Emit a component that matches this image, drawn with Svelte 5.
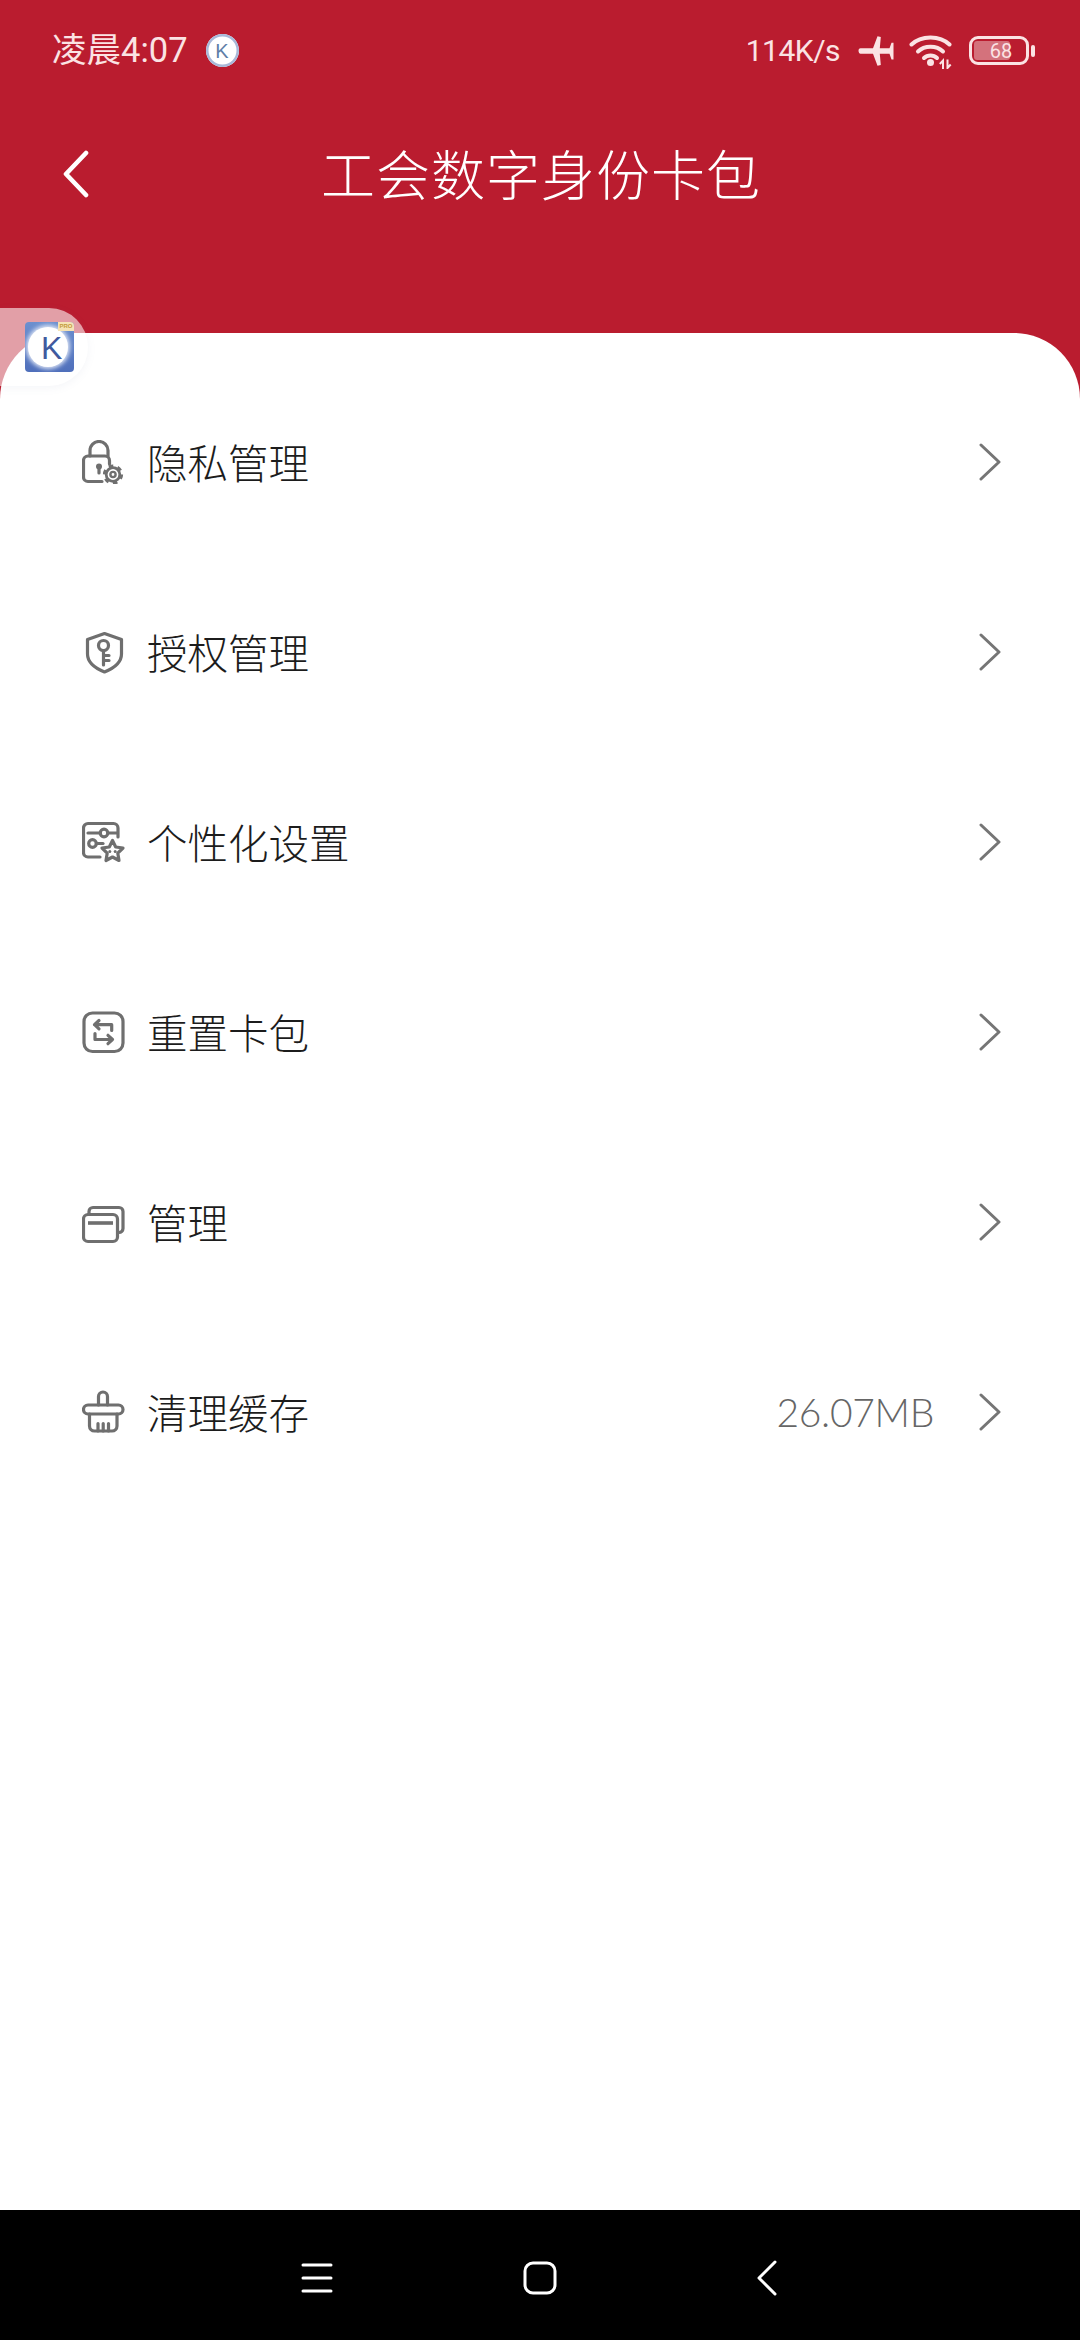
<script>
  const icons = {
    lock: `<path d="M20 41.5H6a4.500 4.500 0 0 1-4.500-4.500V20.500a4.500 4.500 0 0 1 4.500-4.500H23a4.500 4.500 0 0 1 4.500 4.500V24"/><path d="M8 16V10.500a9 9 0 0 1 18 0V16"/><circle cx="17" cy="26.500" r="3" fill="#6f6f6f" stroke="none"/><path d="M17 27v6"/><circle cx="31" cy="34.500" r="6.800" stroke-width="2.800"/><circle cx="31" cy="34.500" r="8.600" stroke-width="3" stroke-dasharray="4.500 4.500" stroke-linecap="butt"/><circle cx="31" cy="34.500" r="2.600" stroke-width="2.400"/>`,
    shield: `<path d="M22.500 3.500 39.500 9.500V24c0 8-7 14-17 18C12.500 38 5.500 32 5.500 24V9.500Z"/><circle cx="21.500" cy="15.500" r="5"/><path d="M21.500 20.500V35M21.500 25.500h5.500M21.500 30.500h5.500"/>`,
    settings: `<path d="M18 37H6a4.500 4.500 0 0 1-4.500-4.500V8A4.500 4.500 0 0 1 6 3.500H31.500A4.500 4.500 0 0 1 36 8V17"/><path d="M6 13h12.500M26 13h9"/><circle cx="22" cy="13" r="3.800"/><circle cx="10.500" cy="23.500" r="3.800"/><path d="M14.500 23.500h6.500"/><path d="M30.500 20.500 33.700 27 41 28 35.800 33.200 37 40.500 30.500 37 24 40.500 25.200 33.200 20 28 27.300 27Z" fill="#fff"/><circle cx="27.800" cy="31.500" r="1.500" fill="#6f6f6f" stroke="none"/><circle cx="33.200" cy="31.500" r="1.500" fill="#6f6f6f" stroke="none"/>`,
    reset: `<rect x="2" y="3" width="39" height="38.500" rx="8.500"/><path d="M29.700 20.500V14.700H12.500M17 10.500 12.500 14.700 17 18.900"/><path d="M13 23.500V29.500H30.500M26 25.300 30.500 29.500 26 33.700"/>`,
    cards: `<rect x="1.500" y="14.500" width="34" height="27" rx="4.500"/><path d="M7 14V11.500A4 4 0 0 1 11 7.500H37A4 4 0 0 1 41 11.500V28.500A4 4 0 0 1 37 32.500H35.500"/><path d="M6 23H31" stroke-width="3.600" stroke-linecap="butt"/>`,
    broom: `<path d="M16.500 15V6.500a4.500 4.500 0 0 1 9 0V15"/><rect x="1.500" y="15" width="39.500" height="9" rx="4.500"/><path d="M7.500 24V36a5 5 0 0 0 5 5H30a5 5 0 0 0 5-5V24"/><path d="M16 41V33.500M21.200 41V33.500M26.500 41V33.500"/>`
  };

  const rows = [
    { icon: 'lock', label: '隐私管理' },
    { icon: 'shield', label: '授权管理' },
    { icon: 'settings', label: '个性化设置' },
    { icon: 'reset', label: '重置卡包' },
    { icon: 'cards', label: '管理' },
    { icon: 'broom', label: '清理缓存', value: '26.07MB' }
  ];
</script>

<div class="page">
  <header class="status">
    <div class="status-left">
      <span class="time">凌晨4:07</span>
      <span class="app-dot"><span>K</span></span>
    </div>
    <div class="status-right">
      <span class="speed">114K/s</span>
      <svg class="plane" width="36" height="32" viewBox="0 0 36 32" aria-hidden="true">
        <path d="M2.500 13.300H15L19.500 1.200 22.800 2 21.800 13.300H31.500L33.500 7.800H35.500V24.500H33.500L31.500 18.700H21.800L22.800 30 19.500 30.800 15 18.700H2.500C.2 18.700-.5 13.300 2.500 13.300Z" fill="#fbe3e4"/>
      </svg>
      <svg class="wifi" width="44" height="36" viewBox="0 0 44 36" aria-hidden="true">
        <g fill="none" stroke="#fbe3e4" stroke-width="4" stroke-linecap="round">
          <path d="M2.500 11.500C12 2 31 2 40.500 11.500"/>
          <path d="M9 18.500C15.500 12 27.500 12 34 18.500"/>
          <path d="M15 25C18.500 21.500 24.500 21.500 28 25"/>
        </g>
        <circle cx="21.500" cy="29.500" r="3.500" fill="#fbe3e4"/>
        <path d="M34 36V27.500L30.800 31M38.500 26.500V35L41.700 31.500" fill="none" stroke="#fbe3e4" stroke-width="2"/>
      </svg>
      <div class="battery">
        <div class="battery-shell">
          <div class="battery-fill"></div>
          <span>68</span>
        </div>
        <div class="battery-tip"></div>
      </div>
    </div>
  </header>

  <nav class="toolbar">
    <svg class="back" width="28" height="48" viewBox="0 0 28 48" aria-hidden="true">
      <path d="M24 3 4 24 24 45" fill="none" stroke="#fff" stroke-width="4.600" stroke-linecap="round" stroke-linejoin="round"/>
    </svg>
    <h1>工会数字身份卡包</h1>
  </nav>

  <main class="card">
    {#each rows as row}
      <div class="row">
        <svg class="icon" width="44" height="44" viewBox="0 0 44 44" aria-hidden="true">
          {@html icons[row.icon]}
        </svg>
        <span class="label">{row.label}</span>
        {#if row.value}<span class="value">{row.value}</span>{/if}
        <svg class="chev" width="22" height="38" viewBox="0 0 22 38" aria-hidden="true">
          <path d="M2 2 20 19 2 36" fill="none" stroke="#757575" stroke-width="3" stroke-linecap="round" stroke-linejoin="round"/>
        </svg>
      </div>
    {/each}
  </main>

  <footer class="sysnav">
    <svg width="32" height="30" viewBox="0 0 32 30" aria-hidden="true">
      <path d="M2 2H30M2 15H30M2 28H30" stroke="#fff" stroke-width="3" stroke-linecap="round"/>
    </svg>
    <svg class="home" width="34" height="34" viewBox="0 0 34 34" aria-hidden="true">
      <rect x="2" y="2" width="30" height="30" rx="8" fill="none" stroke="#fff" stroke-width="3"/>
    </svg>
    <svg class="sysback" width="20" height="36" viewBox="0 0 20 36" aria-hidden="true">
      <path d="M18 2 2 18 18 34" fill="none" stroke="#fff" stroke-width="3" stroke-linecap="round" stroke-linejoin="round"/>
    </svg>
  </footer>

  <aside class="floater">
    <div class="float-icon">
      <div class="float-blob"></div>
      <span class="float-k">K</span>
      <span class="float-pro">PRO</span>
    </div>
  </aside>
</div>

<style>
  :global(body) {
    margin: 0;
  }

  .page {
    position: relative;
    width: 1080px;
    height: 2340px;
    display: flex;
    flex-direction: column;
    background: #ba1c2f;
    overflow: hidden;
    font-family: "Noto Sans CJK SC", "Noto Sans", sans-serif;
  }

  .status {
    height: 100px;
    flex: none;
    display: flex;
    align-items: center;
    justify-content: space-between;
    padding: 1px 45px 0 52px;
    box-sizing: border-box;
    color: #fbe3e4;
  }

  .status-left,
  .status-right {
    display: flex;
    align-items: center;
  }

  .time {
    font-size: 34.500px;
    line-height: 1;
    font-family: "Roboto", "Noto Sans CJK SC", sans-serif;
  }

  .app-dot {
    width: 33px;
    height: 33px;
    margin-left: 18px;
    border-radius: 50%;
    background: #fff;
    box-shadow: inset 0 0 0 2.500px #a8b8d8;
    display: flex;
    align-items: center;
    justify-content: center;
    color: #5f7fa8;
    font: 400 20px/1 "Liberation Sans", sans-serif;
  }

  .speed {
    font: 400 30px/1 "Roboto", sans-serif;
    letter-spacing: -0.500px;
    margin-right: 18px;
  }

  .wifi {
    margin-left: 15px;
  }

  .battery {
    display: flex;
    align-items: center;
    margin-left: 16px;
  }

  .battery-shell {
    position: relative;
    width: 54px;
    height: 23px;
    border: 3.500px solid #fbe3e4;
    border-radius: 9px;
    display: flex;
    align-items: center;
    justify-content: center;
    overflow: hidden;
  }

  .battery-fill {
    position: absolute;
    left: 2px;
    top: 2px;
    bottom: 2px;
    width: 36px;
    background: #d4727c;
    border-radius: 3px;
  }

  .battery-shell span {
    position: relative;
    font: 400 20px/1 "Roboto", sans-serif;
    color: #fbe3e4;
    margin-left: 4px;
  }

  .battery-tip {
    width: 4px;
    height: 12px;
    margin-left: 2px;
    background: #fbe3e4;
    border-radius: 2px;
  }

  .toolbar {
    position: relative;
    height: 148px;
    flex: none;
    display: flex;
    align-items: center;
    justify-content: center;
    margin-bottom: 85px;
    padding-left: 2px;
  }

  .back {
    position: absolute;
    left: 62px;
    top: 50px;
  }

  h1 {
    margin: 0 0 2px;
    font-size: 54px;
    line-height: 1;
    font-weight: 300;
    color: #fff;
    letter-spacing: 1px;
  }

  .card {
    flex: 1;
    background: #fff;
    border-radius: 66px 66px 0 0;
    padding-top: 34px;
  }

  .row {
    height: 190px;
    display: flex;
    align-items: center;
    padding: 0 79px 0 82px;
  }

  .icon {
    flex: none;
    fill: none;
    stroke: #6f6f6f;
    stroke-width: 3.200;
    stroke-linecap: round;
    stroke-linejoin: round;
  }

  .label {
    margin-left: 21px;
    font-size: 40.500px;
    line-height: 1;
    font-weight: 300;
    color: #1c1c1c;
  }

  .value {
    margin-left: auto;
    margin-right: 45px;
    font: 300 39px/1 "Lato", sans-serif;
    letter-spacing: -0.300px;
    color: #666;
  }

  .chev {
    flex: none;
    margin-left: auto;
  }

  .value + .chev {
    margin-left: 0;
  }

  .sysnav {
    height: 130px;
    flex: none;
    background: #000;
    display: flex;
    justify-content: center;
    align-items: center;
    padding: 5px 2px 0 0;
    box-sizing: border-box;
  }

  .home {
    margin-left: 190px;
  }

  .sysback {
    margin-left: 200px;
  }

  .floater {
    position: absolute;
    left: 0;
    top: 308px;
    width: 88px;
    height: 78px;
    background: rgba(255, 255, 255, 0.58);
    border-radius: 0 42px 42px 0;
    box-shadow: 0 2px 8px rgba(120, 130, 170, 0.08);
  }

  .float-icon {
    position: absolute;
    left: 25px;
    top: 14px;
    width: 49px;
    height: 50px;
    border-radius: 4px;
    overflow: hidden;
    background: linear-gradient(180deg, #6c90cf, #4f6fbb);
  }

  .float-blob {
    position: absolute;
    left: 3px;
    top: 5px;
    width: 40px;
    height: 40px;
    border-radius: 50%;
    background: #fff;
    box-shadow: 0 0 4px 2px #dfe6f5;
  }

  .float-k {
    position: absolute;
    left: 16px;
    top: 10px;
    font: 400 32px/1 "Liberation Sans", sans-serif;
    color: #3f5a9e;
  }

  .float-pro {
    position: absolute;
    right: 0;
    top: 0;
    width: 16px;
    height: 9px;
    background: #f5e3b5;
    color: #c49a3a;
    font: 700 6px/9px "Liberation Sans", sans-serif;
    text-align: center;
  }
</style>
